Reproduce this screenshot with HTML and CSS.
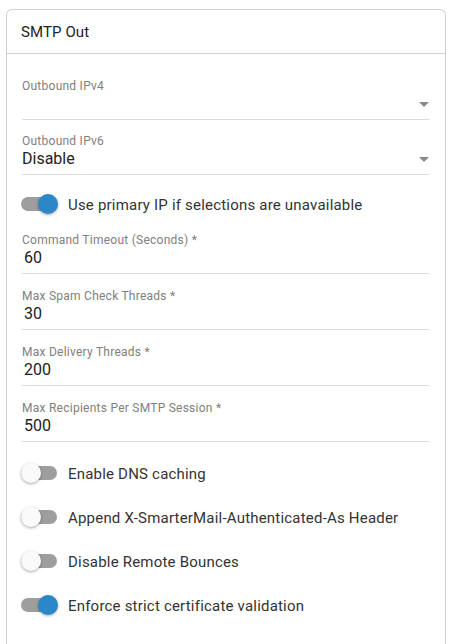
FILE: index.html
```html
<!DOCTYPE html>
<html>
<head>
<meta charset="utf-8">
<link rel="stylesheet" href="styles.css">
</head>
<body>
<div class="card">
  <div class="card-header">SMTP Out</div>
  <div class="card-body">
    <div class="field select first">
      <div class="label">Outbound IPv4</div>
      <div class="value"></div>
      <span class="caret"></span>
    </div>
    <div class="field select second">
      <div class="label">Outbound IPv6</div>
      <div class="value">Disable</div>
      <span class="caret"></span>
    </div>
    <div class="toggle-row single">
      <span class="switch on"><span class="knob"></span></span>
      <span class="toggle-text">Use primary IP if selections are unavailable</span>
    </div>
    <div class="field after-toggle">
      <div class="label">Command Timeout (Seconds) *</div>
      <div class="value input">60</div>
    </div>
    <div class="field">
      <div class="label">Max Spam Check Threads *</div>
      <div class="value input">30</div>
    </div>
    <div class="field">
      <div class="label">Max Delivery Threads *</div>
      <div class="value input">200</div>
    </div>
    <div class="field">
      <div class="label">Max Recipients Per SMTP Session *</div>
      <div class="value input">500</div>
    </div>
    <div class="toggle-group">
      <div class="toggle-row">
        <span class="switch"><span class="knob"></span></span>
        <span class="toggle-text">Enable DNS caching</span>
      </div>
      <div class="toggle-row">
        <span class="switch"><span class="knob"></span></span>
        <span class="toggle-text">Append X-SmarterMail-Authenticated-As Header</span>
      </div>
      <div class="toggle-row">
        <span class="switch"><span class="knob"></span></span>
        <span class="toggle-text">Disable Remote Bounces</span>
      </div>
      <div class="toggle-row">
        <span class="switch on"><span class="knob"></span></span>
        <span class="toggle-text">Enforce strict certificate validation</span>
      </div>
    </div>
  </div>
</div>
</body>
</html>
```
FILE: styles.css
```css
* { box-sizing: border-box; }
html, body { margin: 0; padding: 0; background: #fff; }
body {
  font-family: Roboto, "Liberation Sans", Arial, sans-serif;
  color: #222;
}
.card {
  margin: 9px 0 0 6px;
  width: 440px;
  height: 636px;
  border: 1px solid #cfcfcf;
  border-bottom: 0;
  border-radius: 6px 6px 0 0;
}
.card-header {
  height: 44px;
  padding: 0 0 0 14px;
  display: flex;
  align-items: center;
  font-size: 15px;
  letter-spacing: 0.1px;
  color: #222;
  border-bottom: 1px solid #d2d2d2;
}
.card-body {
  display: flex;
  flex-direction: column;
  padding: 25px 16px 0 15px;
}
.field {
  position: relative;
  height: 41px;
  margin-top: 15px;
  border-bottom: 1px solid #dcdcdc;
}
.field.first { margin-top: 0; }
.field.second { margin-top: 14px; }
.field.after-toggle { margin-top: 7px; }
.label {
  font-size: 12px;
  line-height: 14px;
  letter-spacing: 0.25px;
  color: #808080;
}
.value {
  font-size: 16px;
  line-height: 21px;
  height: 21px;
  color: #222;
}
.value.input { padding-left: 2px; }
.caret {
  position: absolute;
  right: 0;
  top: 23px;
  width: 0;
  height: 0;
  border-left: 5px solid transparent;
  border-right: 5px solid transparent;
  border-top: 5px solid #8a8a8a;
}
.toggle-row {
  display: flex;
  align-items: center;
  height: 44px;
}
.toggle-row.single { margin-top: 7px; }
.toggle-group {
  display: flex;
  flex-direction: column;
  margin-top: 9px;
}
.switch {
  position: relative;
  flex: none;
  width: 36px;
  height: 14px;
  margin-left: -1px;
  border-radius: 7px;
  background: #9e9e9e;
}
.knob {
  position: absolute;
  top: -3px;
  left: 0;
  width: 20px;
  height: 20px;
  border-radius: 50%;
  background: #fafafa;
  box-shadow: 0 1px 3px rgba(0,0,0,0.35);
}
.switch.on .knob {
  left: 17px;
  background: #2b87c8;
}
.toggle-text {
  margin-left: 11px;
  margin-top: 2px;
  font-size: 15px;
  letter-spacing: 0.2px;
  color: #333;
}
```
